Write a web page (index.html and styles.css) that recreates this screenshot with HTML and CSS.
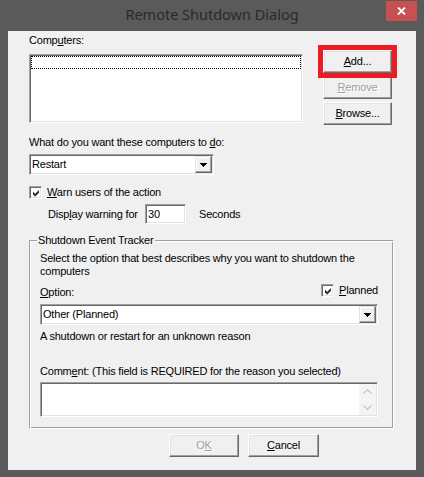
FILE: index.html
```html
<!DOCTYPE html>
<html>
<head>
<meta charset="utf-8">
<title>Remote Shutdown Dialog</title>
<link rel="stylesheet" href="styles.css">
</head>
<body>
<div class="window">
  <div class="titlebar">
    <div class="title">Remote Shutdown Dialog</div>
    <div class="close">
      <svg width="9" height="8" viewBox="0 0 9 8"><path d="M1 0.5 L8 7.5 M8 0.5 L1 7.5" stroke="#fff" stroke-width="1.8" fill="none"/></svg>
    </div>
  </div>
  <div class="client">
    <div class="top-row">
      <div class="list-col">
        <div class="label">Comp<u>u</u>ters:</div>
        <div class="listbox sunken"><div class="focus-item"></div></div>
      </div>
      <div class="btn-col">
        <div class="btn-wrap highlighted"><div class="btn"><span><u>A</u>dd...</span></div></div>
        <div class="btn disabled"><span><u>R</u>emove</span></div>
        <div class="btn"><span><u>B</u>rowse...</span></div>
      </div>
    </div>

    <div class="label q-label">What do you want these computers to <u>d</u>o:</div>
    <div class="combo sunken combo-small">
      <div class="combo-text">Restart</div>
      <div class="combo-btn"><svg width="7" height="4" viewBox="0 0 7 4"><rect x="0" y="0" width="7" height="1"/><rect x="1" y="1" width="5" height="1"/><rect x="2" y="2" width="3" height="1"/><rect x="3" y="3" width="1" height="1"/></svg></div>
    </div>

    <div class="check-row warn-row">
      <span class="check sunken"><svg width="7" height="7" viewBox="0 0 7 7"><rect x="6" y="0" width="1" height="1"/><rect x="5" y="1" width="2" height="1"/><rect x="0" y="2" width="1" height="1"/><rect x="4" y="2" width="3" height="1"/><rect x="0" y="3" width="2" height="1"/><rect x="3" y="3" width="3" height="1"/><rect x="0" y="4" width="5" height="1"/><rect x="1" y="5" width="3" height="1"/><rect x="2" y="6" width="1" height="1"/></svg></span>
      <span class="label"><u>W</u>arn users of the action</span>
    </div>

    <div class="display-row">
      <span class="label display-label">Disp<u>l</u>ay warning for</span>
      <div class="edit sunken">30</div>
      <span class="label seconds">Seconds</span>
    </div>

    <div class="group">
      <div class="legend">Shutdown Event Tracker</div>
      <div class="label nowrap">Select the option that best describes why you want to shutdown the<br>computers</div>
      <div class="option-row">
        <span class="label opt-label"><u>O</u>ption:</span>
        <span class="check-row planned">
          <span class="check sunken"><svg width="7" height="7" viewBox="0 0 7 7"><rect x="6" y="0" width="1" height="1"/><rect x="5" y="1" width="2" height="1"/><rect x="0" y="2" width="1" height="1"/><rect x="4" y="2" width="3" height="1"/><rect x="0" y="3" width="2" height="1"/><rect x="3" y="3" width="3" height="1"/><rect x="0" y="4" width="5" height="1"/><rect x="1" y="5" width="3" height="1"/><rect x="2" y="6" width="1" height="1"/></svg></span>
          <span class="label"><u>P</u>lanned</span>
        </span>
      </div>
      <div class="combo sunken combo-wide">
        <div class="combo-text">Other (Planned)</div>
        <div class="combo-btn"><svg width="7" height="4" viewBox="0 0 7 4"><rect x="0" y="0" width="7" height="1"/><rect x="1" y="1" width="5" height="1"/><rect x="2" y="2" width="3" height="1"/><rect x="3" y="3" width="1" height="1"/></svg></div>
      </div>
      <div class="label desc">A shutdown or restart for an unknown reason</div>
      <div class="label comment-label">Comm<u>e</u>nt: (This field is REQUIRED for the reason you selected)</div>
      <div class="comment sunken">
        <div class="comment-text"></div>
        <div class="vscroll">
          <div class="sb-btn"><svg width="9" height="5" viewBox="0 0 9 5"><path d="M0.5 4.5 L4.5 0.7 L8.5 4.5" stroke="#c4c4c4" stroke-width="1.2" fill="none"/></svg></div>
          <div class="sb-btn"><svg width="9" height="5" viewBox="0 0 9 5"><path d="M0.5 0.5 L4.5 4.3 L8.5 0.5" stroke="#c4c4c4" stroke-width="1.2" fill="none"/></svg></div>
        </div>
      </div>
    </div>

    <div class="bottom-row">
      <div class="btn disabled ok"><span>O<u>K</u></span></div>
      <div class="btn cancel"><span><u>C</u>ancel</span></div>
    </div>
  </div>
</div>
</body>
</html>
```

FILE: styles.css
```css
* { box-sizing: border-box; }
html, body { margin: 0; padding: 0; }
body {
  width: 424px;
  height: 477px;
  overflow: hidden;
  background: #5a5a5a;
  font-family: "Liberation Sans", Arial, sans-serif;
  font-size: 11px;
  color: #000;
}
.window {
  width: 424px;
  height: 477px;
  background: #5a5a5a;
  display: flex;
  flex-direction: column;
}
.titlebar {
  height: 31px;
  display: grid;
  grid-template-columns: 1fr auto 1fr;
  align-items: start;
}
.title {
  grid-column: 2;
  font-family: "Noto Sans", "Open Sans", sans-serif;
  font-size: 14.5px;
  line-height: 20px;
  padding-top: 4px;
  color: #2a2a2a;
  white-space: nowrap;
}
.close {
  grid-column: 3;
  justify-self: end;
  margin: 1px 7px 0 0;
  width: 31px;
  height: 20px;
  background: #c75050;
  display: flex;
  align-items: center;
  justify-content: center;
}
.close svg { display: block; }
.client {
  margin: 0 8px;
  height: 439px;
  background: #f0f0f0;
  padding-left: 21px;
  letter-spacing: -0.2px;
}
.label {
  line-height: 13px;
  white-space: nowrap;
}
.nowrap { white-space: nowrap; }
u { text-decoration: underline; text-underline-offset: 1px; }

.sunken {
  background: #fff;
  border: 1px solid;
  border-color: #a0a0a0 #fff #fff #a0a0a0;
  box-shadow: inset 1px 1px #696969, inset -1px -1px #e3e3e3;
  padding: 1px;
}

/* top */
.top-row { display: flex; height: 94px; }
.list-col { width: 274px; padding-top: 3px; }
.listbox { margin-top: 7px; height: 69px; }
.focus-item { height: 13px; border: 1px dotted #000; }
.btn-col {
  margin-left: 20px;
  padding-top: 19px;
  display: flex;
  flex-direction: column;
  gap: 3px;
}
.btn {
  width: 69px;
  height: 23px;
  background: #f0f0f0;
  border: 1px solid;
  border-color: #fff #696969 #696969 #fff;
  box-shadow: inset -1px -1px #a0a0a0, inset 1px 1px #e3e3e3;
  display: flex;
  align-items: center;
  justify-content: center;
  line-height: 13px;
}
.btn.disabled { color: #a0a0a0; text-shadow: 1px 1px #fff; }
.btn-wrap { position: relative; }
.highlighted::after {
  content: "";
  position: absolute;
  left: -5px; top: -5px; right: -5px; bottom: -5px;
  border: 5px solid #ed1c24;
}

.q-label { margin-top: 11px; }
.combo { display: flex; height: 21px; margin-top: 5px; }
.combo-small { width: 185px; }
.combo-text { flex: 1; padding-left: 1px; line-height: 17px; white-space: nowrap; }
.combo-btn {
  width: 17px;
  height: 17px;
  background: #f0f0f0;
  border: 1px solid;
  border-color: #e3e3e3 #696969 #696969 #e3e3e3;
  box-shadow: inset -1px -1px #a0a0a0, inset 1px 1px #fff;
  display: flex;
  align-items: center;
  justify-content: center;
}
.combo-btn svg { display: block; fill: #000; }

.check-row { display: flex; align-items: center; gap: 5px; }
.warn-row { margin-top: 11px; height: 13px; }
.check {
  width: 13px;
  height: 13px;
  padding: 2px;
  display: flex;
  align-items: flex-start;
  justify-content: flex-start;
  flex: none;
}
.check svg { display: block; fill: #000; margin: 1px 0 0 1px; }

.display-row {
  margin-top: 5px;
  height: 20px;
  padding-left: 19px;
  display: flex;
  align-items: center;
}
.display-label { width: 97px; }
.edit { width: 41px; height: 20px; padding-left: 2px; line-height: 16px; }
.seconds { margin-left: 13px; }

.group {
  position: relative;
  margin-top: 16px;
  width: 365px;
  height: 189px;
  border: 1px solid;
  border-color: #a0a0a0 #fff #fff #a0a0a0;
  box-shadow: inset 1px 1px #fff, inset -1px -1px #a0a0a0;
  padding: 11px 0 0 10px;
}
.legend {
  position: absolute;
  top: -7px;
  left: 7px;
  padding: 0 2px 0 1px;
  background: #f0f0f0;
  line-height: 13px;
  white-space: nowrap;
}
.option-row { display: flex; align-items: flex-start; margin-top: 6px; height: 15px; }
.opt-label { width: 281px; margin-top: 2px; }
.planned { height: 13px; }
.combo-wide { width: 338px; }
.desc { margin-top: 5px; }
.comment-label { margin-top: 22px; }
.comment { margin-top: 4px; width: 338px; height: 35px; display: flex; }
.comment-text { flex: 1; }
.vscroll {
  width: 17px;
  background: #f4f4f4;
  display: flex;
  flex-direction: column;
  justify-content: space-between;
}
.sb-btn { height: 15px; display: flex; align-items: center; justify-content: center; }
.sb-btn svg { display: block; }

.bottom-row { display: flex; margin-top: 5px; padding-left: 140px; gap: 9px; }
.ok { width: 70px; }
.cancel { width: 71px; }
```
